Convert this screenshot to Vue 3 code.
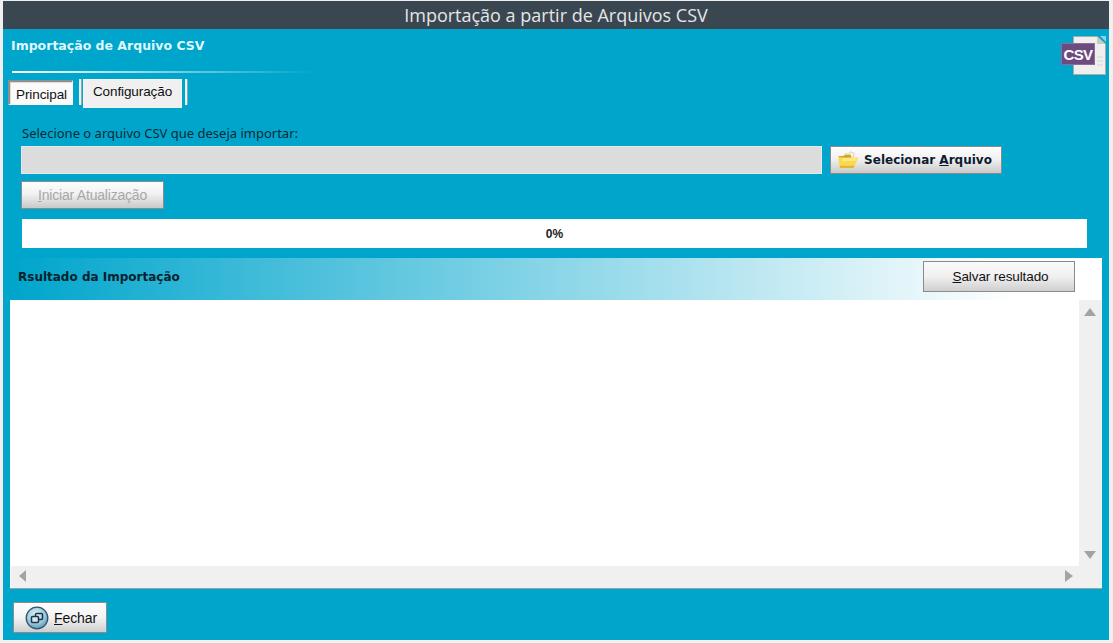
<script setup>
const title = 'Importação a partir de Arquivos CSV'
</script>

<template>
  <div class="window">
    <header class="titlebar">{{ title }}</header>
    <main class="content">
      <div class="head">
        <div class="head-title">Importação de Arquivo CSV</div>
        <svg class="csv" width="46" height="42" viewBox="0 0 46 42">
          <path d="M12.500 1.500H36L44.500 9V39.500H12.500Z" fill="#eff0ee" stroke="#a9aba9" />
          <path d="M36 1.500V9H44.500Z" fill="#c9cac8" />
          <path d="M39 1H45V7Z" fill="#8ed0e2" />
          <path d="M36 22H42M36 26H42M36 30H42" stroke="#d4d6d4" />
          <rect x="0.500" y="8.500" width="33" height="21" fill="#6d4a80" stroke="#8c6c9c" />
          <text x="17" y="25" class="csv-text">CSV</text>
        </svg>
      </div>
      <div class="rule"></div>
      <nav class="tabs">
        <button class="tab active">Principal</button>
        <span class="sep"></span>
        <button class="tab">Configuração</button>
        <span class="sep"></span>
      </nav>

      <section class="form">
        <label class="label">Selecione o arquivo CSV que deseja importar:</label>
        <div class="file-row">
          <div class="file-input"></div>
          <button class="btn select-btn">
            <svg width="22" height="18" viewBox="0 0 22 18">
              <path d="M7 6L8.500 2.500L12 3L13 .8L17 2L16.500 6Z" fill="#f7f5e6" stroke="#cfcab0" stroke-width=".7" />
              <path d="M1 5H7L8 3.800H14V7H3Z" fill="#d2a51e" />
              <path d="M5 6.500H21.500L16.500 17H3L1 5.500Z" fill="#fad84f" />
              <path d="M5.500 7H20.500L18.800 10H4.500Z" fill="#fde77f" />
              <path d="M3 17H16.500L17.500 14.800H2.600Z" fill="#e3b62c" />
            </svg>
            <span>Selecionar <u>A</u>rquivo</span>
          </button>
        </div>
        <button class="btn start-btn" disabled><span><u>I</u>niciar Atualização</span></button>
        <div class="progress">0%</div>
      </section>

      <section class="result">
        <div class="result-head">
          <strong>Rsultado da Importação</strong>
          <button class="btn save-btn"><span><u>S</u>alvar resultado</span></button>
        </div>
        <div class="result-body">
          <div class="log"></div>
          <div class="vscroll"><i class="arrow up"></i><i class="arrow down"></i></div>
          <div class="hscroll"><i class="arrow left"></i><i class="arrow right"></i></div>
          <div class="corner"></div>
        </div>
      </section>

      <footer class="footer">
        <button class="btn close-btn">
          <svg width="24" height="24" viewBox="0 0 24 24">
            <defs>
              <radialGradient id="orb" cx=".45" cy=".35" r=".7">
                <stop offset="0" stop-color="#e4f1f6" />
                <stop offset=".6" stop-color="#9cc9dd" />
                <stop offset="1" stop-color="#4f8fb0" />
              </radialGradient>
            </defs>
            <circle cx="12" cy="12" r="10.800" fill="url(#orb)" stroke="#2f5670" stroke-width="1.300" />
            <rect x="10.500" y="7.500" width="7" height="6" rx="1" fill="none" stroke="#1c3547" stroke-width="1.500" />
            <rect x="6.500" y="10.500" width="7" height="6" rx="1" fill="#d5e7ef" stroke="#1c3547" stroke-width="1.500" />
          </svg>
          <span><u>F</u>echar</span>
        </button>
      </footer>
    </main>
  </div>
</template>

<style scoped>
.window {
  width: 1106px;
  height: 639px;
  margin: 1px 0 0 3px;
  display: flex;
  flex-direction: column;
  background: #00a5cc;
  font-family: "Open Sans", "Liberation Sans", sans-serif;
  color: #10202a;
  overflow: hidden;
}
.titlebar {
  height: 28px;
  flex: none;
  background: #3a4750;
  color: #e4e6e8;
  font-size: 18px;
  line-height: 29px;
  text-align: center;
}
.content {
  flex: 1;
  display: flex;
  flex-direction: column;
  min-height: 0;
}
.head {
  height: 42px;
  display: flex;
  justify-content: space-between;
  padding: 9px 2px 0 8px;
  box-sizing: border-box;
}
.head-title {
  color: #dff7fb;
  font-family: "DejaVu Sans", sans-serif;
  font-size: 12.500px;
  font-weight: 700;
  line-height: 15px;
}
.csv {
  margin-top: -3px;
  flex: none;
}
.csv-text {
  fill: #fff;
  font-family: "Liberation Sans", sans-serif;
  font-size: 15px;
  font-weight: 700;
  text-anchor: middle;
  letter-spacing: -.6px;
}
.rule {
  width: 303px;
  height: 2px;
  margin: 0 0 0 9px;
  background: linear-gradient(90deg, #fff, rgba(255, 255, 255, .55) 45%, rgba(255, 255, 255, 0));
}
.tabs {
  height: 29px;
  margin: 6px 0 0 5px;
  display: flex;
  align-items: flex-start;
}
.tab {
  width: 99px;
  height: 29px;
  padding: 0 0 4px;
  border: 0;
  background: #f0f0f0;
  box-shadow: inset 1px 1px 0 #fbfbfb;
  color: #111;
  font: 13.500px "Liberation Sans", sans-serif;
  letter-spacing: -.1px;
}
.tab.active {
  width: 65px;
  height: 25px;
  margin-top: 1px;
  padding: 2px 0 0 1px;
  background: #fafafa;
  border: 1px solid #fff;
  border-top: 2px solid #8f8f8f;
  border-left: 2px solid #8f8f8f;
  box-sizing: border-box;
  box-shadow: inset 1px 1px 0 #dcdcdc;
  font-size: 13.500px;
}
.sep {
  width: 2px;
  height: 26px;
  margin: 0 1px 0 6px;
  border-right: 1px solid #8fa8ae;
  background: #e8f3f5;
  box-sizing: content-box;
  flex: none;
}
.sep:last-child {
  margin: 0 0 0 3px;
}
.form {
  padding: 21px 22px 0 18px;
}
.label {
  display: block;
  height: 12px;
  padding-left: 1px;
  font: 13px/8px "Noto Sans", sans-serif;
  color: #0b2a36;
}
.file-row {
  display: flex;
  gap: 8px;
  margin-top: 5px;
}
.file-input {
  width: 801px;
  height: 28px;
  box-sizing: border-box;
  background: #dcdcdc;
  border: 1px solid #e8e8e8;
}
.btn {
  display: flex;
  align-items: center;
  justify-content: center;
  box-sizing: border-box;
  padding: 0;
  border: 1px solid #8b8b8b;
  background: linear-gradient(#fdfdfd, #f2f2f2 45%, #c9c9c9);
  color: #111;
  font-family: "Liberation Sans", sans-serif;
}
.select-btn {
  width: 172px;
  height: 28px;
  gap: 5px;
  padding-right: 3px;
  font-family: "DejaVu Sans", sans-serif;
  font-size: 12px;
  font-weight: 700;
  color: #0e1a30;
}
.start-btn {
  width: 143px;
  height: 28px;
  margin-top: 7px;
  font-size: 14px;
  color: #a8a8a8;
  letter-spacing: -.2px;
}
.progress {
  width: 1065px;
  height: 29px;
  margin: 10px 0 0 1px;
  background: #fff;
  font: 700 12px/30px "Liberation Sans", sans-serif;
  text-align: center;
  color: #222;
}
.result {
  height: 330px;
  margin: 10px 5px 0 7px;
  width: 1092px;
  display: flex;
  flex-direction: column;
  background: #f0f0f0;
  box-shadow: 0 1px 0 #8da7ae;
}
.result-head {
  height: 42px;
  flex: none;
  display: flex;
  align-items: flex-start;
  justify-content: space-between;
  padding: 3px 27px 0 8px;
  box-sizing: border-box;
  background: linear-gradient(90deg, #00a5cc, #fff 92%);
}
.result-head strong {
  margin-top: 9px;
  font: 700 12px/15px "DejaVu Sans", sans-serif;
  color: #07222c;
}
.save-btn {
  width: 152px;
  height: 31px;
  padding-left: 3px;
  font-size: 13.500px;
  letter-spacing: -.1px;
  background: linear-gradient(#fafafa, #f0f0f0 50%, #cfcfcf);
}
.result-body {
  flex: 1;
  display: grid;
  grid-template-columns: 1068px 23px;
  grid-template-rows: 266px 22px;
  background: #f0f0f0;
  border-left: 1px solid #fff;
}
.log {
  background: #fff;
}
.vscroll,
.hscroll {
  position: relative;
}
.arrow {
  position: absolute;
  width: 0;
  height: 0;
  border-style: solid;
  border-color: transparent;
}
.up {
  top: 8px;
  left: 5px;
  border-width: 0 6px 8px;
  border-bottom-color: #a3a3a3;
}
.down {
  bottom: 7px;
  left: 5px;
  border-width: 8px 6px 0;
  border-top-color: #a3a3a3;
}
.left {
  top: 4px;
  left: 8px;
  border-width: 6px 7px 6px 0;
  border-right-color: #a3a3a3;
}
.right {
  top: 4px;
  right: 6px;
  border-width: 6px 0 6px 8px;
  border-left-color: #a3a3a3;
}
.footer {
  padding: 14px 0 0 10px;
}
.close-btn {
  width: 94px;
  height: 31px;
  gap: 5px;
  padding-left: 2px;
  font-size: 14px;
  letter-spacing: -.1px;
  background: linear-gradient(#fdfdfd, #f3f3f3 50%, #cfcfcf);
}
</style>

<style>
html, body {
  background: #f0f0f0;
  overflow: hidden;
}
</style>
